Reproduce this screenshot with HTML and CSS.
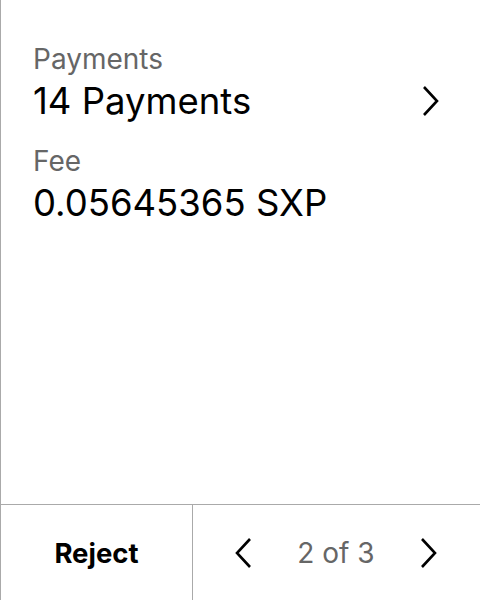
FILE: index.html
```html
<!DOCTYPE html>
<html>
<head>
<meta charset="utf-8">
<link rel="stylesheet" href="styles.css">
</head>
<body>
<div class="screen">
  <div class="content">
    <div class="field">
      <div class="label">Payments</div>
      <div class="row">
        <div class="value">14 Payments</div>
        <svg class="chev" width="18" height="32" viewBox="0 0 18 32"><path d="M2 2 L15 16 L2 30" fill="none" stroke="#000" stroke-width="2.6"/></svg>
      </div>
    </div>
    <div class="field">
      <div class="label">Fee</div>
      <div class="value">0.05645365 SXP</div>
    </div>
  </div>
  <div class="footer">
    <div class="reject">Reject</div>
    <div class="pager">
      <svg class="chev" width="18" height="32" viewBox="0 0 18 32"><path d="M16 2 L3 16 L16 30" fill="none" stroke="#000" stroke-width="2.6"/></svg>
      <span class="count">2 of 3</span>
      <svg class="chev" width="18" height="32" viewBox="0 0 18 32"><path d="M2 2 L15 16 L2 30" fill="none" stroke="#000" stroke-width="2.6"/></svg>
    </div>
  </div>
</div>
</body>
</html>
```
FILE: styles.css
```css
html, body { margin: 0; padding: 0; background: #fff; }
body { font-family: Inter, "Noto Sans", sans-serif; }
.screen {
  width: 480px; height: 600px; box-sizing: border-box;
  border-left: 1px solid #aaa;
  display: flex; flex-direction: column;
}
.content { flex: 1; padding: 42px 40px 0 32px; display: flex; flex-direction: column; gap: 21px; }
.field { display: flex; flex-direction: column; gap: 3px; }
.label { font-size: 28px; color: #666; line-height: 34px; }
.value { font-size: 36.5px; color: #000; line-height: 44px; }
.row { display: flex; justify-content: space-between; align-items: center; }
.footer { height: 96px; box-sizing: border-box; border-top: 1px solid #aaa; display: flex; }
.reject { width: 191px; border-right: 1px solid #aaa; display: flex; align-items: center; justify-content: center; font-weight: 700; font-size: 27.5px; color: #000; }
.pager { flex: 1; display: flex; align-items: center; justify-content: space-between; padding: 0 42px 0 41px; }
.count { font-size: 28px; color: #666; }
```
